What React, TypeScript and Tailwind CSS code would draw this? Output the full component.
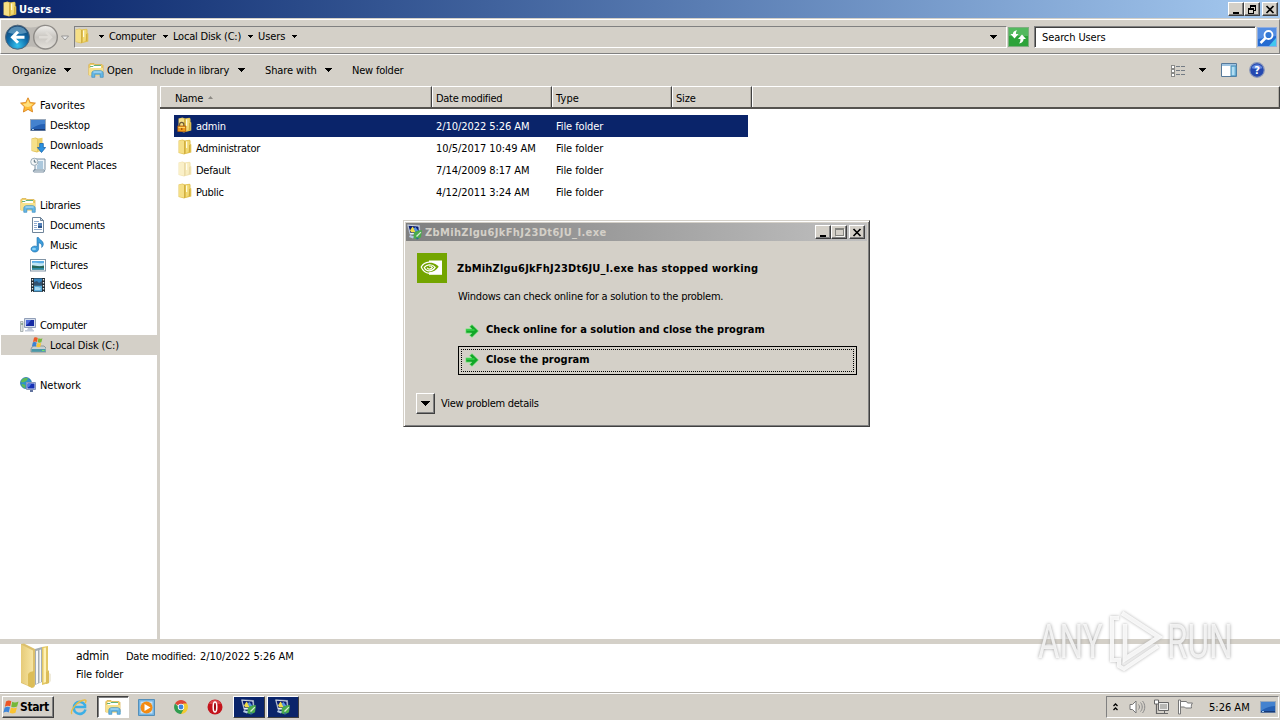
import type { ReactNode } from "react"

type IconProps = { className?: string }

const raised = "border border-t-white border-l-white border-r-[#404040] border-b-[#404040] bg-[#d4d0c8] shadow-[inset_-1px_-1px_0_#808080]"

const Label = ({ children, className = "pt-0.5" }: { children: ReactNode; className?: string }) => (
  <span className={className}>{children}</span>
)

const Caret = ({ className = "" }: IconProps) => (
  <svg className={`shrink-0 ${className}`} width="7" height="4" viewBox="0 0 7 4" shapeRendering="crispEdges">
    <path d="M0 0h7v1H6v1H5v1H4v1H3V3H2V2H1V1H0z" fill="#000" />
  </svg>
)

const SmallCaret = ({ className = "" }: IconProps) => (
  <svg className={`shrink-0 ${className}`} width="5" height="3" viewBox="0 0 5 3" shapeRendering="crispEdges">
    <path d="M0 0h5v1H4v1H3v1H2V2H1V1H0z" fill="#000" />
  </svg>
)

const FolderIcon = ({ className = "", locked = false }: IconProps & { locked?: boolean }) => (
  <svg className={`shrink-0 ${className}`} width="16" height="16" viewBox="0 0 16 16">
    <path d="M1.500 1.500 5.500.5 8 1.500V15l-1 .5-5.500-1.500z" fill="#e6c860" />
    <path d="M2 2 5 1.200 7 2v12.500L2 13.500z" fill="#f5df86" />
    <path d="M7.500 1.500 12.500.8l1 1V5l.8.5v8l-6.800 1.800z" fill="#dfbf4e" />
    <path d="M9 2 12.500 1.500v5l-1 6.500L9 14z" fill="#f2da74" />
    <path d="M9 2.500h1.200V9H9z" fill="#fffbe0" />
    <path d="M7.500 2v13M12.500 6v7" stroke="#cda93c" strokeWidth=".8" />
    {locked && (
      <g>
        <path d="M2.600 9V7.400a2.100 2.100 0 0 1 4.200 0V9" fill="none" stroke="#6e5a38" strokeWidth="1.200" />
        <rect x=".8" y="9" width="8" height="5.500" fill="#ef9c1d" stroke="#a8540c" strokeWidth=".7" />
        <path d="M1.500 10.500h6.500" stroke="#ffd665" />
        <path d="M4.800 11v2" stroke="#8b4208" />
      </g>
    )}
  </svg>
)

const StarIcon = () => (
  <svg width="16" height="16" viewBox="0 0 16 16">
    <path d="m8 .8 2.200 4.700 5.200.6-3.800 3.600 1 5.200L8 12.400 3.400 15l1-5.300L.6 6.100l5.200-.6z" fill="#ffbd35" stroke="#d98320" strokeWidth=".9" />
    <path d="m8 2.500 1.600 4 3.500.4-2.600 2.300L8 10 5.200 9.400 2.800 7l3.600-.4z" fill="#ffe080" />
  </svg>
)

const ScreenIcon = () => (
  <svg width="16" height="16" viewBox="0 0 16 16">
    <rect x=".5" y="2.500" width="15" height="11" fill="#2560b4" stroke="#9aa9bb" />
    <path d="M1 3h14v4C9 7 5 9 1 12z" fill="#4482cf" />
    <path d="M1 12h14v1.500H1z" fill="#173a78" />
    <path d="M2 12h2v1H2z" fill="#9ec9ee" />
  </svg>
)

const DownloadsIcon = () => (
  <svg width="16" height="16" viewBox="0 0 16 16">
    <path d="M1.500 1.500 5.500.5 8 1.500V15l-1 .5-5.500-1.500z" fill="#e0bf58" />
    <path d="M2 2 5 1.200 7 2v12.500L2 13.500z" fill="#f5e08a" />
    <path d="M7.500 1.500 12.500.8V14l-5 1z" fill="#ebd06a" />
    <path d="M9.700 6.500h3.600v4h2.300l-4.100 5-4.100-5h2.300z" fill="#2c92e0" stroke="#1863ac" strokeWidth=".8" />
  </svg>
)

const RecentIcon = () => (
  <svg width="16" height="16" viewBox="0 0 16 16">
    <path d="M5 2h10v10.500l-1 2.500H4c-1 0-1-2 0-2h1z" fill="#eef4f9" stroke="#6d8496" strokeWidth=".9" />
    <path d="M8 5h5M8 7h5M7 9h6M7 11h6" stroke="#6a9cc0" />
    <path d="M4 13h10" stroke="#6d8496" />
    <circle cx="4.300" cy="4.800" r="3.600" fill="#f5f7f8" stroke="#9bacb8" />
    <path d="M4.300 2.700v2.400h2" stroke="#536b7a" fill="none" />
  </svg>
)

const LibraryIcon = ({ className = "" }: IconProps) => (
  <svg className={`shrink-0 ${className}`} width="16" height="16" viewBox="0 0 16 16">
    <path d="M.8 2.800 2 1.500h4l1 1h7l1 1V13H.8z" fill="#efcf68" stroke="#d5ae48" strokeWidth=".7" />
    <path d="M2.500 3h10.500v3H2.500z" fill="#fff" />
    <path d="M2 4.500h3l1-1h7" stroke="#62b37b" fill="none" />
    <path d="M.8 6h14.200v7.500H.8z" fill="#f7e18c" />
    <path d="M3.800 15.300v-4c0-1.800 1.200-2.600 3.200-2.600h5c2 0 3.200.8 3.200 2.600v4h-3V12.200H6.800v3.100z" fill="#66b7e6" stroke="#3a8ec2" strokeWidth=".7" />
    <path d="M5.500 10h8" stroke="#c2e6f8" />
  </svg>
)

const DocumentIcon = () => (
  <svg width="16" height="16" viewBox="0 0 16 16">
    <path d="M2.500.5h8l3 3v12h-11z" fill="#fff" stroke="#70859a" />
    <path d="M10.500.5v3h3z" fill="#cbdcec" stroke="#70859a" />
    <path d="M4 4.500h5M4 6.500h3M4 8.500h3M4 10.500h3M4 12.500h8" stroke="#8fabd0" />
    <path d="M8 6h4v5H8z" fill="#5481b9" />
    <path d="M8 9h4v2H8z" fill="#29538b" />
  </svg>
)

const MusicIcon = () => (
  <svg width="16" height="16" viewBox="0 0 16 16">
    <path d="M7 .5h1.500c.7 2.600 5 3 4.800 6.500 0 1.600-.7 2.800-1.700 3.500.8-2.700-.6-4.200-3-4.800v6.500A3.800 3 0 1 1 7 9.600z" fill="#3c9ddb" stroke="#1c6eac" strokeWidth=".6" />
    <ellipse cx="4" cy="12" rx="2" ry="1.200" fill="#8bd1f6" />
  </svg>
)

const PictureIcon = () => (
  <svg width="16" height="16" viewBox="0 0 16 16">
    <rect x=".5" y="2.500" width="15" height="11.500" fill="#fff" stroke="#8194a5" />
    <path d="M2 4h12v8.500H2z" fill="#5caee7" />
    <path d="M2 6c4-1 7 1 12 0v3H2z" fill="#c1e6f5" />
    <path d="M2 8.200c3 0 6 1.800 12 .4v3.900H2z" fill="#276759" />
    <path d="M2 11h12v1.500H2z" fill="#2c8ba5" />
  </svg>
)

const VideoIcon = () => (
  <svg width="16" height="16" viewBox="0 0 16 16">
    <path d="M1 1h14v14H1z" fill="#222c34" />
    <path d="M4 1.500h8v6H4z" fill="#3482bd" />
    <path d="M4 8.500h8v6H4z" fill="#58a9d9" />
    <path d="m4 5 3-1 2 2 3-2v3.500H4z" fill="#315170" />
    <path d="M5 10h3l3 1-1 2H5z" fill="#a3d7f1" />
    <path d="M2.500 2v13M13.500 2v13" stroke="#e9eef2" strokeWidth="1.300" strokeDasharray="1.500 1.500" />
  </svg>
)

const ComputerIcon = () => (
  <svg width="16" height="16" viewBox="0 0 16 16">
    <path d="M.5 4.500h2.500v10H.5z" fill="#dfe3e3" stroke="#9ca6a6" strokeWidth=".8" />
    <path d="M1 7h2" stroke="#54805b" />
    <path d="M4.500 1.500h11v9h-11z" fill="#d2dcec" stroke="#929fb8" />
    <path d="M6 3h8v6H6z" fill="#172ba3" />
    <path d="M6 3h5L8 7l-2 1z" fill="#4b68dc" />
    <path d="M8 11h4l1 2H7zM5 13h9v1.500H5z" fill="#c3cbda" />
  </svg>
)

const DiskIcon = () => (
  <svg width="16" height="16" viewBox="0 0 16 16">
    <path d="m2 10 2-1h10l2 2v4H1v-3z" fill="#c8d0d2" stroke="#758082" strokeWidth=".7" />
    <path d="M1.500 12h14v2.800h-14z" fill="#4b98a7" />
    <path d="M12 13.500h2.500" stroke="#71e466" />
    <path d="M4 .8c1.500-.8 2.700-.5 3.800.1L7 4.900c-1.200-.7-2.600-.7-4 0z" fill="#ec5a26" />
    <path d="M8.400 1.300c1.300.7 2.600.6 4-.1l-1 4.100c-1.400.6-2.600.5-3.800-.1z" fill="#76b83b" />
    <path d="M2.800 5.500c1.400-.7 2.600-.6 3.900 0L5.800 9.600c-1.200-.6-2.500-.6-3.900 0z" fill="#3c83d1" />
    <path d="M7.300 5.900c1.300.6 2.500.7 3.900 0l-1 4.100c-1.400.5-2.600.5-3.800-.1z" fill="#f8c736" />
  </svg>
)

const NetworkIcon = () => (
  <svg width="16" height="16" viewBox="0 0 16 16">
    <circle cx="6" cy="6" r="5.500" fill="#2e91ca" stroke="#20699d" strokeWidth=".7" />
    <path d="M2 2.500C4.500.5 6 1 8 1.200L6.500 4 3 5.500.9 5zM2.500 7l3 1-.5 3.200C3 10.600 1.600 9.200 1.500 7z" fill="#5ebb55" />
    <path d="M6.500 5.500h9v7h-9z" fill="#cbd8ef" stroke="#8795ba" />
    <path d="M7.500 6.500h7v5h-7z" fill="#1631b5" />
    <path d="M7.500 6.500h4l-2 3-2 1z" fill="#4c79e6" />
    <path d="M10 13h3v2h-3z" fill="#63749f" />
  </svg>
)

const ProgramIcon = () => (
  <svg className="shrink-0" width="16" height="16" viewBox="0 0 16 16">
    <path d="M.5.8 12.500 1.500l.5 8.500-10 .5z" fill="#eef2f7" stroke="#a8b5c8" strokeWidth=".7" />
    <path d="m1.500 1.800 10 .7.5 6-8.500.5z" fill="#0b1d70" />
    <path d="m3 6.500 2.500-4 2 2.500 1 3-4 .5z" fill="#f2dc46" />
    <path d="m6.500 4.500 2-1.500 3 4-3 1z" fill="#5794de" />
    <path d="M7 8.500c3-1.800 5-2.300 8-2.200l-1 7-4 2.200-4-1.500z" fill="#4aac4c" />
    <path d="m9 12 4.500-4.200.8.700L10 13z" fill="#d7ecd6" />
    <path d="m3 11 4 1.500-1 2-4-1.500z" fill="#b5c9e4" />
    <path d="m9 13.500 3 .5-2 1.500z" fill="#2c5fae" />
  </svg>
)

const WindowsFlag = () => (
  <svg className="shrink-0" width="17" height="17" viewBox="0 0 17 17">
    <path d="M3 2.500c2-1.300 3.700-1.100 5.300-.3L7.200 7.300c-1.600-.8-3.200-.8-5.300.4z" fill="#ed5524" />
    <path d="M9.200 2.800c1.900.9 3.800.9 6.300-.4l-1.400 5.200c-2.200 1-4 .9-5.900.1z" fill="#75b83b" />
    <path d="M1.700 8.500c2-1.100 3.700-1.100 5.300-.3l-1.300 5.200c-1.600-.8-3.300-.8-5.400.3z" fill="#3e86d9" />
    <path d="M8 8.600c1.800.9 3.700.9 5.900-.1l-1.400 5.300c-2.100 1-4 .9-5.800 0z" fill="#fac331" />
  </svg>
)

const GreenArrow = () => (
  <svg className="shrink-0" width="14" height="14" viewBox="0 0 14 14">
    <path d="M.8 4.800h5.800L4.500 2.800 7 .5 13.600 7 7 13.500l-2.500-2.200 2.100-2.100H.8z" fill="#12a828" stroke="#a9efa4" strokeWidth=".7" />
    <path d="M1.500 6h8" stroke="#3fe052" strokeWidth="1.200" />
  </svg>
)

const NvidiaIcon = () => (
  <svg className="shrink-0" width="30" height="30" viewBox="0 0 30 30">
    <path d="M0 0h30v30H0z" fill="#73a500" />
    <path d="M12 7.500h13v14.300H12z" fill="#fff" />
    <path d="M12 9.700c5.500-.4 8.500 2.500 9.700 4.100-2.400 3.200-5.500 5.600-9.700 5.500z" fill="#73a500" />
    <path d="M12 9.200c-4.300.4-6.800 3-7.800 4.800 1.500 3.600 4.300 6 8 6.300 3.500.2 6.500-1 9.300-3.400" fill="none" stroke="#fff" strokeWidth="1.200" />
    <path d="M12 11.800c-2.500.3-4 1.600-4.700 2.600.9 2.200 2.700 3.400 5 3.400 2.400 0 4.200-1.200 5.800-3.500-1.200-1.500-3.200-2.800-6.100-2.500z" fill="none" stroke="#fff" strokeWidth="1.200" />
    <path d="M12 13.200c1.400-.4 2.600.2 3.400 1.200-.9 1.200-1.800 1.800-3.100 1.700-1.200 0-1.800-.6-2.200-1.400" fill="none" stroke="#fff" strokeWidth="1.100" />
  </svg>
)

const MinimizeGlyph = () => (
  <svg width="13" height="11" viewBox="0 0 13 11" shapeRendering="crispEdges">
    <path d="M3 8h6v2H3z" fill="#000" />
  </svg>
)

const RestoreGlyph = () => (
  <svg width="13" height="11" viewBox="0 0 13 11" shapeRendering="crispEdges">
    <path d="M4 1h6v6H8V6h1V3H5v1H4zM2 4h6v6H2zm1 2v3h4V6z" fill="#000" fillRule="evenodd" />
  </svg>
)

const MaximizeGlyph = () => (
  <svg width="13" height="11" viewBox="0 0 13 11" shapeRendering="crispEdges">
    <path d="M2 1h9v8H2zm1 2v5h7V3z" fill="#858580" fillRule="evenodd" />
    <path d="M3 9h9v1H3zM11 2h1v7h-1z" fill="#f4f4f0" />
  </svg>
)

const CloseGlyph = () => (
  <svg width="13" height="11" viewBox="0 0 13 11">
    <path d="m2.500 2 7 7M9.500 2l-7 7" stroke="#000" strokeWidth="1.700" />
  </svg>
)

function CaptionButton({ children, className = "" }: { children: ReactNode; className?: string }) {
  return <button className={`flex h-[14px] w-4 items-center justify-center ${raised} ${className}`}>{children}</button>
}

const navGroups = [
  {
    label: "Favorites",
    icon: <StarIcon />,
    tracking: "tracking-[0.05px]",
    items: [
      { label: "Desktop", icon: <ScreenIcon /> },
      { label: "Downloads", icon: <DownloadsIcon /> },
      { label: "Recent Places", icon: <RecentIcon /> },
    ],
  },
  {
    label: "Libraries",
    icon: <LibraryIcon />,
    tracking: "tracking-[-0.25px]",
    items: [
      { label: "Documents", icon: <DocumentIcon /> },
      { label: "Music", icon: <MusicIcon /> },
      { label: "Pictures", icon: <PictureIcon /> },
      { label: "Videos", icon: <VideoIcon /> },
    ],
  },
  {
    label: "Computer",
    icon: <ComputerIcon />,
    tracking: "tracking-[-0.3px]",
    items: [{ label: "Local Disk (C:)", icon: <DiskIcon />, active: true }],
  },
  { label: "Network", icon: <NetworkIcon />, tracking: "tracking-[-0.05px]", items: [] },
]

const files = [
  { name: "admin", date: "2/10/2022 5:26 AM", selected: true },
  { name: "Administrator", date: "10/5/2017 10:49 AM" },
  { name: "Default", date: "7/14/2009 8:17 AM", faded: true },
  { name: "Public", date: "4/12/2011 3:24 AM" },
]

function TitleBar() {
  return (
    <div className="flex h-[18px] items-center bg-linear-to-r from-[#0a246a] to-[#a6caf0] pl-0.5 pr-0.5">
      <FolderIcon />
      <Label className="ml-px flex-1 pt-0.5 font-bold text-white tracking-[0.2px]">Users</Label>
      <CaptionButton><MinimizeGlyph /></CaptionButton>
      <CaptionButton><RestoreGlyph /></CaptionButton>
      <CaptionButton className="ml-0.5"><CloseGlyph /></CaptionButton>
    </div>
  )
}

function AddressBar() {
  return (
    <div className="mt-px flex h-[35px] items-center border border-t-white border-l-white border-r-[#808080] border-b-[#808080] pl-[3px] pr-0.5">
      <svg className="shrink-0" width="66" height="28" viewBox="0 0 66 28">
        <defs>
          <radialGradient id="back" cx=".5" cy=".85" r=".8">
            <stop offset="0" stopColor="#35c2ee" />
            <stop offset=".55" stopColor="#0e6aa8" />
            <stop offset="1" stopColor="#174673" />
          </radialGradient>
          <linearGradient id="forward" x2="0" y2="1">
            <stop stopColor="#f1efec" />
            <stop offset=".5" stopColor="#c9c6c1" />
            <stop offset="1" stopColor="#e5e2dc" />
          </linearGradient>
        </defs>
        <path d="M13 1.500c6 0 6 3 14 3s9-3 14-3v25c-6 0-7-3-14-3s-8 3-14 3z" fill="#bcb9b4" />
        <circle cx="13.500" cy="14.200" r="12" fill="url(#back)" stroke="#52677a" />
        <path d="M4 9.500a10.500 10.500 0 0 1 19 0c-7 2-12 2-19 0z" fill="#7eb6d7" opacity=".6" />
        <path d="M20.500 14.200h-12m5.500-5.500-5.500 5.500 5.500 5.500" fill="none" stroke="#fff" strokeWidth="3" />
        <circle cx="41.500" cy="14.200" r="11.800" fill="url(#forward)" stroke="#8e8b87" strokeWidth="1.400" />
        <path d="M35 14.200h12m-5-5 5 5-5 5" fill="none" stroke="#dedbd6" strokeWidth="2.400" />
        <path d="M57.500 13h7l-3.500 4z" fill="#eee" stroke="#858585" strokeWidth=".8" />
      </svg>
      <div className="ml-1 flex h-[22px] flex-1 items-center border border-t-[#808080] border-l-[#808080] border-r-white border-b-white">
        <FolderIcon className="-ml-px -mt-0.5" />
        <SmallCaret className="ml-[9px]" />
        <Label className="ml-[5px] w-[48px] tracking-[-0.3px]">Computer</Label>
        <SmallCaret className="ml-[6px]" />
        <Label className="ml-[5px] w-[69px] tracking-[-0.2px]">Local Disk (C:)</Label>
        <SmallCaret className="ml-[6px]" />
        <Label className="ml-[5px] w-[28px] tracking-[-0.1px]">Users</Label>
        <SmallCaret className="ml-[6px]" />
        <Caret className="ml-auto mr-[9px]" />
      </div>
      <svg className="ml-px shrink-0" width="21" height="20" viewBox="0 0 21 20">
        <rect x=".5" y=".5" width="20" height="19" fill="#2da33a" stroke="#7fae81" />
        <path d="M1 1h19v8H1z" fill="#69c471" opacity=".65" />
        <path d="m6.500 11.500-4-4.500h2.400c.2-2 1.300-3.200 4.300-3.700-1 1-1.300 2.200-1.200 3.700h2.500z" fill="#fff" />
        <path d="m14 7.500 4 4.500h-2.400c-.2 2.500-1.600 4-4.600 4.500 1.200-1.200 1.500-2.700 1.400-4.500H10z" fill="#fff" />
      </svg>
      <div className="ml-[5px] flex h-[22px] w-[222px] items-center border border-t-[#808080] border-l-[#808080] border-r-white border-b-white bg-white pl-[7px] shadow-[inset_1px_1px_0_#404040]">
        <Label className="pt-0.5 tracking-[-0.1px]">Search Users</Label>
      </div>
      <svg className="ml-px shrink-0" width="20" height="20" viewBox="0 0 20 20">
        <rect x=".5" y=".5" width="19" height="19" fill="#246bd1" stroke="#91aee0" />
        <path d="M1 1h18v8L1 12z" fill="#7aaaf0" opacity=".55" />
        <path d="M12 19h7v-8z" fill="#42c6ef" />
        <circle cx="11.500" cy="8" r="4" fill="#3378d5" stroke="#fff" strokeWidth="1.800" />
        <path d="m8.500 11-5 5" stroke="#fff" strokeWidth="2.500" />
      </svg>
    </div>
  )
}

function Toolbar() {
  return (
    <div className="flex h-[32px] items-center border-t border-white pb-px pl-3">
      <Label className="w-[45px] pt-0.5 tracking-[-0.05px]">Organize</Label>
      <Caret className="ml-[7px]" />
      <LibraryIcon className="ml-[17px]" />
      <Label className="ml-[3px] w-[43px] pt-0.5 tracking-[-0.1px]">Open</Label>
      <Label className="w-[80px] pt-0.5 tracking-[-0.23px]">Include in library</Label>
      <Caret className="ml-2" />
      <Label className="ml-5 w-[53px] pt-0.5 tracking-[-0.1px]">Share with</Label>
      <Caret className="ml-[7px]" />
      <Label className="ml-5 pt-0.5 tracking-[-0.2px]">New folder</Label>
      <svg className="ml-auto" width="16" height="13" viewBox="0 0 16 13" shapeRendering="crispEdges">
        <path d="M1 1h3v3H1zM1 5h3v3H1zM1 9h3v3H1z" fill="#fff" stroke="#8a8a88" strokeWidth="1" />
        <path d="M6 2.500h4M11 2.500h4M6 6.500h4M11 6.500h4M6 10.500h4M11 10.500h4" stroke="#737b84" />
      </svg>
      <Caret className="ml-[13px]" />
      <svg className="ml-[15px]" width="16" height="14" viewBox="0 0 16 14">
        <path d="M.5.5h15v13H.5z" fill="#fff" stroke="#56799a" />
        <path d="M1 1h14v2H1z" fill="#9ec4e2" />
        <path d="M10 3h5v10h-5z" fill="#8fcbe9" stroke="#478db7" />
        <path d="M12 4v8" stroke="#d7f0fc" />
      </svg>
      <svg className="ml-3 mr-[15px]" width="16" height="16" viewBox="0 0 16 16">
        <circle cx="8" cy="8" r="7.300" fill="#2448b0" stroke="#8b98ba" strokeWidth="1.200" />
        <path d="M2.500 6a6 6 0 0 1 11 0c-3 1.500-8 1.500-11 0z" fill="#6589df" />
        <text x="8" y="12" textAnchor="middle" fontSize="11" fontWeight="bold" fill="#fff" letterSpacing="0">?</text>
      </svg>
    </div>
  )
}

function NavigationPane() {
  return (
    <nav className="w-[160px] shrink-0 border-r-[3px] border-[#d4d0c8] pt-[9px]">
      {navGroups.map((group) => (
        <div key={group.label} className="mb-5">
          <div className="flex h-5 items-center gap-1 pl-5">
            {group.icon}
            <Label className={`pt-0.5 ${group.tracking}`}>{group.label}</Label>
          </div>
          {group.items.map((item) => (
            <div
              key={item.label}
              className={`ml-px flex h-5 items-center gap-1 pl-[29px] tracking-[-0.15px] ${"active" in item ? "bg-[#d4d0c8]" : ""}`}
            >
              {item.icon}
              <Label>{item.label}</Label>
            </div>
          ))}
        </div>
      ))}
    </nav>
  )
}

const columnCell = "flex h-full items-center border-t border-l border-white border-r border-r-[#404040] shadow-[inset_-1px_0_0_#b0aca4]"

function FileList() {
  return (
    <div className="min-w-0 flex-1">
      <div className="flex h-[23px] items-center border-b-2 border-[#55534f] bg-[#d4d0c8]">
        <div className={`${columnCell} w-[272px] pl-[14px]`}>
          <Label className="pt-1">Name</Label>
          <svg className="ml-[5px]" width="5" height="3" viewBox="0 0 5 3"><path d="M0 3h5L2.500 0z" fill="#8c8983" /></svg>
        </div>
        <div className={`${columnCell} w-[120px] pl-[3px]`}><Label className="pt-1">Date modified</Label></div>
        <div className={`${columnCell} w-[120px] pl-[3px]`}><Label className="pt-1 tracking-[0.1px]">Type</Label></div>
        <div className={`${columnCell} w-[80px] pl-[3px]`}><Label className="pt-1 tracking-[-0.2px]">Size</Label></div>
        <div className={`${columnCell} flex-1`} />
      </div>
      <div className="pl-[14px] pt-[6px]">
        {files.map((file) => (
          <div
            key={file.name}
            className={`flex h-[22px] w-[574px] items-center pl-[3px] ${file.selected ? "bg-[#0a246a] text-white" : ""}`}
          >
            <FolderIcon locked={file.selected} className={`-mt-0.5 ${file.faded ? "opacity-45" : ""}`} />
            <Label className="ml-[3px] w-[240px] pt-0.5 tracking-[-0.26px]">{file.name}</Label>
            <Label className="w-[120px] pt-0.5 tracking-[-0.06px]">{file.date}</Label>
            <Label className="pt-0.5 tracking-[-0.1px]">File folder</Label>
          </div>
        ))}
      </div>
    </div>
  )
}

function DetailsPane() {
  return (
    <div className="flex h-[53px] border-t-[5px] border-[#d4d0c8] bg-white pl-[18px]">
      <svg className="-mt-0.5 shrink-0" width="38" height="48" viewBox="0 0 38 48">
        <defs>
          <linearGradient id="flap">
            <stop stopColor="#e6cb79" />
            <stop offset="1" stopColor="#f7e5a2" />
          </linearGradient>
        </defs>
        <path d="m3 2 3-.5 11 5.500v37l-2 2L3 41z" fill="#dcc06d" />
        <path d="m3 2.500 12 6V46L3 40z" fill="url(#flap)" />
        <path d="m17 7 7-2v35l-7 3z" fill="#a4adb4" />
        <path d="m18 9 2-.5V41l-2 1zM21.500 8l1.500-.5V40l-1.500 1z" fill="#f6f8f8" />
        <path d="m24 5 6-1v24l1 1v12l-7 2z" fill="#e2c765" />
        <path d="m25.500 6 2.500-.5V40l-2.500 1z" fill="#fff2b7" />
        <path d="m12 30 4-1v15l-2 2-4-2V32zM28 30l3-1v12l-3 1z" fill="#dcbd58" />
        <path d="m31 31 2 1v7l-2 2z" fill="#efebdc" />
      </svg>
      <div className="ml-5">
        <div className="flex h-[18px] items-center pt-[6px]">
          <Label className="w-[50px] text-[12px] tracking-[-0.2px]">admin</Label>
          <Label className="w-[74px] pt-0.5 tracking-[-0.26px]">Date modified:</Label>
          <Label className="pt-0.5 tracking-[-0.05px]">2/10/2022 5:26 AM</Label>
        </div>
        <div className="mt-[3px] flex h-[18px] items-center"><Label className="pt-0.5 tracking-[-0.1px]">File folder</Label></div>
      </div>
    </div>
  )
}

function Taskbar() {
  return (
    <footer className="flex h-[28px] items-center border-t border-[#b5b2ac] bg-[#d4d0c8] pt-px shadow-[inset_0_1px_0_white]">
      <button className={`ml-0.5 flex h-[22px] w-[52px] items-center text-[12px] font-bold tracking-[-0.4px] ${raised}`}>
        <WindowsFlag />
        <Label className="pt-0">Start</Label>
      </button>
      <svg className="ml-4" width="18" height="18" viewBox="0 0 18 18">
        <path d="M15.500 11.500A6 6 0 1 1 15 7v2H4.500" fill="none" stroke="#3cafe6" strokeWidth="2.600" />
        <path d="M2 16c-3-2 5-13 12-14 3-.5 2 2 1 3" fill="none" stroke="#e9bd43" strokeWidth="1.400" />
      </svg>
      <div className="ml-[9px] flex h-[22px] w-8 items-center justify-center border border-t-[#404040] border-l-[#404040] border-r-white border-b-white bg-white shadow-[inset_1px_1px_0_#808080]">
        <LibraryIcon />
      </div>
      <svg className="ml-[9px]" width="17" height="17" viewBox="0 0 17 17">
        <path d="M.5.5h16v16H.5z" fill="#74b4e3" stroke="#548fb9" />
        <path d="M2.500 2.500h12v12h-12z" fill="#c7e2f4" />
        <circle cx="8.500" cy="8.500" r="6" fill="#f38b13" />
        <path d="m6.500 5 6 3.500-6 3.500z" fill="#fff" />
      </svg>
      <svg className="ml-[19px]" width="14" height="14" viewBox="0 0 14 14">
        <path d="M1 3.500A7 7 0 0 1 13 3.500L7 7z" fill="#df4737" />
        <path d="M13 3.500A7 7 0 0 1 7 14l-1-4 3-3V3.500z" fill="#f2ca32" />
        <path d="M1 3.500A7 7 0 0 0 7 14l3-5.500H6z" fill="#319d50" />
        <circle cx="7" cy="7" r="3.200" fill="#fff" />
        <circle cx="7" cy="7" r="2.400" fill="#3c83dd" />
      </svg>
      <svg className="ml-[19px]" width="16" height="16" viewBox="0 0 16 16">
        <circle cx="8" cy="8" r="7.500" fill="#c4141c" />
        <path d="M2 5a6.500 6.500 0 0 1 12 0z" fill="#db4449" />
        <ellipse cx="8" cy="8" rx="1.800" ry="5" fill="#a10c12" stroke="#fff" strokeWidth="1.500" />
      </svg>
      <div className="ml-[10px] flex gap-0.5">
        {[1, 2].map((task) => (
          <div key={task} className="flex h-[22px] w-8 items-center justify-center border border-t-white border-l-white border-r-[#404040] border-b-[#404040] bg-[#0a246a]">
            <ProgramIcon />
          </div>
        ))}
      </div>
      <div className="ml-auto mr-px flex h-[22px] w-[173px] items-center border border-t-[#808080] border-l-[#808080] border-r-white border-b-white pl-[6px]">
        <svg width="5" height="8" viewBox="0 0 5 8"><path d="m.5 3 2-2 2 2m-4 4 2-2 2 2" fill="none" stroke="#000" strokeWidth="1.300" /></svg>
        <svg className="ml-[11px]" width="17" height="16" viewBox="0 0 17 16">
          <path d="M1 5.500h2.500L7 2v12l-3.500-3.500H1z" fill="#fff" stroke="#777" />
          <path d="M9.500 5.500c1.300 1.500 1.300 3.500 0 5M11.500 3.500c2.300 2.500 2.300 6.500 0 9M13.500 2c3 3.500 3 8.500 0 12" fill="none" stroke="#898989" />
        </svg>
        <svg className="ml-[7px]" width="17" height="16" viewBox="0 0 17 16">
          <path d="M5.500 3.500h10v8h-10zM8 14.500h7m-3.500-3v3" fill="#ededeb" stroke="#666" />
          <path d="M7 5h7v5H7z" fill="#b7b7b4" />
          <path d="M1.500 1h4v4h-4z" fill="#fff" stroke="#666" />
          <path d="M3.500 5v9.500H8" fill="none" stroke="#666" strokeWidth="1.200" />
        </svg>
        <svg className="ml-[7px]" width="17" height="16" viewBox="0 0 17 16">
          <path d="M1.500 1h2v14h-2z" fill="#fff" stroke="#777" />
          <path d="M3.500 2.500h6l1 1.500h5c-1 1-1.500 3-1 5H8.500l-1-1h-4z" fill="#fff" stroke="#777" />
        </svg>
        <Label className="ml-[15px] w-[43px] pt-0.5 tracking-[0px]">5:26 AM</Label>
        <span className="ml-2"><ScreenIcon /></span>
      </div>
    </footer>
  )
}

function CrashDialog() {
  return (
    <div className="absolute left-[403px] top-[220px] h-[207px] w-[467px] border border-t-[#d4d0c8] border-l-[#d4d0c8] border-r-[#404040] border-b-[#404040] bg-[#d4d0c8] p-0.5 shadow-[inset_1px_1px_0_white,inset_-1px_-1px_0_#808080]">
      <div className="flex h-[18px] items-center bg-linear-to-r from-[#808080] to-[#c0c0c0] pl-px pr-0.5">
        <ProgramIcon />
        <Label className="ml-0.5 flex-1 pt-0.5 font-bold tracking-[0.36px] text-[#d4d0c8]">ZbMihZlgu6JkFhJ23Dt6JU_I.exe</Label>
        <CaptionButton><MinimizeGlyph /></CaptionButton>
        <CaptionButton><MaximizeGlyph /></CaptionButton>
        <CaptionButton className="ml-0.5"><CloseGlyph /></CaptionButton>
      </div>
      <div className="flex pl-[11px] pt-[12px]">
        <NvidiaIcon />
        <div className="ml-[10px] w-[400px]">
          <h1 className="mt-[9px] h-[14px] font-bold leading-[14px] tracking-[0.2px]">
            ZbMihZlgu6JkFhJ23Dt6JU_I.exe has stopped working
          </h1>
          <p className="mt-[14px] h-[14px] pl-px leading-[14px] tracking-[-0.24px]">Windows can check online for a solution to the problem.</p>
          <button className="mt-[12px] flex h-[29px] w-full items-center gap-[7px] pl-2 text-left font-bold">
            <GreenArrow />
            <Label className="pb-0.5 tracking-[0px]">Check online for a solution and close the program</Label>
          </button>
          <button className="mt-px ml-px block h-[29px] w-[399px] border border-black p-0.5">
            <span className="flex h-full items-center gap-[7px] border border-dotted border-black pl-[3px] pb-0.5 font-bold tracking-[0.03px]">
              <GreenArrow />
              <Label className="pt-0">Close the program</Label>
            </span>
          </button>
        </div>
      </div>
      <div className="mt-[18px] flex items-center pl-[10px]">
        <button className={`flex h-[21px] w-[19px] items-center justify-center ${raised}`}>
          <svg width="9" height="5" viewBox="0 0 9 5" shapeRendering="crispEdges">
            <path d="M0 0h9v1H8v1H7v1H6v1H5v1H4V4H3V3H2V2H1V1H0z" fill="#000" />
          </svg>
        </button>
        <span className="ml-[6px]">View problem details</span>
      </div>
    </div>
  )
}

function Watermark() {
  return (
    <div className="pointer-events-none absolute left-[1038px] top-[609px] flex h-[66px] w-[196px] items-center font-[Roboto] text-[48px] leading-none tracking-normal text-white/80 [text-shadow:0_0_4px_#989898]">
      <span className="w-[66px]"><span className="inline-block origin-left scale-x-[0.69]">ANY</span></span>
      <svg className="mb-0.5 ml-[4px] shrink-0 [filter:drop-shadow(0_0_1.5px_#a4a4a4)]" width="58" height="66" viewBox="0 0 58 66">
        <path d="m14 5 37 24-34 22V16" fill="none" stroke="#fff" strokeWidth="4.500" opacity=".85" />
        <path d="M11 10H4v42h7v6l5 3 34-23" fill="none" stroke="#fff" strokeWidth="4" opacity=".85" />
      </svg>
      <span className="ml-[1px] w-[66px]"><span className="inline-block origin-left scale-x-[0.69]">RUN</span></span>
    </div>
  )
}

export default function App() {
  return (
    <div className="relative flex h-[720px] w-[1280px] flex-col overflow-hidden whitespace-nowrap bg-[#d4d0c8] font-['DejaVu_Sans_Condensed','DejaVu_Sans',sans-serif] text-[11px] leading-[14px] tracking-[-0.3px] text-black">
      <TitleBar />
      <AddressBar />
      <Toolbar />
      <main className="flex h-[553px] bg-white">
        <NavigationPane />
        <FileList />
      </main>
      <DetailsPane />
      <Taskbar />
      <CrashDialog />
      <Watermark />
    </div>
  )
}
